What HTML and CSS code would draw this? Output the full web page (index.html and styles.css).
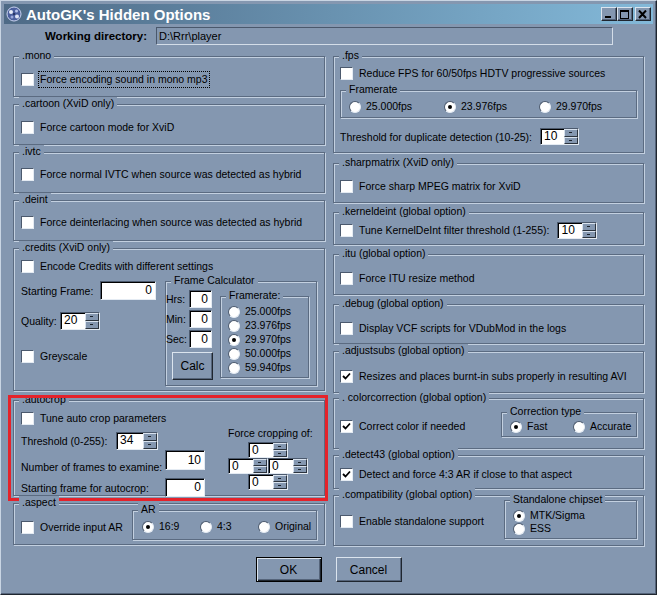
FILE: index.html
```html
<!DOCTYPE html>
<html lang="en">
  <head>
    <meta charset="UTF-8" />
    <title>AutoGK's Hidden Options</title>
    <link rel="stylesheet" href="styles.css">
  </head>
  <body>
    <div class="window">
      <div class="titlebar">
        <svg class="app-icon" viewBox="0 0 16 16">
          <circle cx="8" cy="8" r="7" fill="#4b5f9e" />
          <circle cx="8" cy="8" r="7" fill="none" stroke="#c9d3ef" stroke-width="1" />
          <circle cx="5" cy="6" r="2" fill="#e8ecf8" />
          <circle cx="10.5" cy="5" r="1.5" fill="#b6c2ea" />
          <circle cx="11" cy="10.5" r="2" fill="#dfe5f7" />
          <circle cx="6" cy="11" r="1.5" fill="#9aa8dc" />
          <circle cx="8" cy="8" r="1" fill="#1b2650" />
        </svg>
        <span class="title">AutoGK's Hidden Options</span>
        <div class="caption-btns">
          <span class="cbtn"><svg width="10" height="9"><rect x="1" y="6" width="6" height="2" fill="#000" /></svg></span>
          <span class="cbtn"><svg width="10" height="9"><rect x="0.5" y="0.5" width="8" height="8" fill="none" stroke="#000" /><rect x="0" y="0" width="9" height="2" fill="#000" /></svg></span>
          <span class="cbtn close"><svg width="10" height="9"><path d="M1 0.5 L8 8 M8 0.5 L1 8" stroke="#000" stroke-width="2" /></svg></span>
        </div>
      </div>

      <div class="workdir">
        <span class="workdir-label">Working directory:</span>
        <div class="workdir-field">D:\Rrr\player</div>
      </div>

      <div class="columns">
        <div class="col">
          <div class="group g-mono">
            <span class="cap">.mono</span>
            <div class="check"><span class="cb"></span><span class="focus">Force encoding sound in mono mp3</span></div>
          </div>
          <div class="group g-cartoon">
            <span class="cap">.cartoon (XviD only)</span>
            <div class="check"><span class="cb"></span>Force cartoon mode for XviD</div>
          </div>
          <div class="group g-ivtc">
            <span class="cap">.ivtc</span>
            <div class="check"><span class="cb"></span>Force normal IVTC when source was detected as hybrid</div>
          </div>
          <div class="group g-deint">
            <span class="cap">.deint</span>
            <div class="check"><span class="cb"></span>Force deinterlacing when source was detected as hybrid</div>
          </div>

          <div class="group g-credits">
            <span class="cap">.credits (XviD only)</span>
            <div class="check"><span class="cb"></span>Encode Credits with different settings</div>
            <div class="credits-body">
              <div class="credits-left">
                <div class="row">
                  <span class="lbl-start">Starting Frame:</span>
                  <div class="edit w-start">0</div>
                </div>
                <div class="row row-quality">
                  <span class="lbl-quality">Quality:</span>
                  <div class="spin s-quality"><span class="spin-val">20</span><span class="spin-btns"><i></i><i></i></span></div>
                </div>
                <div class="check grey"><span class="cb"></span>Greyscale</div>
              </div>
              <div class="group g-calc">
                <span class="cap">Frame Calculator</span>
                <div class="calc-left">
                  <div class="hms"><span class="lbl-hms">Hrs:</span><div class="edit w-hms">0</div></div>
                  <div class="hms"><span class="lbl-hms">Min:</span><div class="edit w-hms">0</div></div>
                  <div class="hms"><span class="lbl-hms">Sec:</span><div class="edit w-hms">0</div></div>
                  <div class="btn calc">Calc</div>
                </div>
                <div class="group g-rate">
                  <span class="cap">Framerate:</span>
                  <div class="radio"><span class="rb"></span>25.000fps</div>
                  <div class="radio"><span class="rb"></span>23.976fps</div>
                  <div class="radio"><span class="rb on"></span>29.970fps</div>
                  <div class="radio"><span class="rb"></span>50.000fps</div>
                  <div class="radio"><span class="rb"></span>59.940fps</div>
                </div>
              </div>
            </div>
          </div>

          <div class="group g-autocrop">
            <span class="cap">.autocrop</span>
            <div class="check"><span class="cb"></span>Tune auto crop parameters</div>
            <div class="autocrop-body">
              <div class="ac-left">
                <div class="row row-thresh">
                  <span class="lbl-thresh">Threshold (0-255):</span>
                  <div class="spin s-thresh"><span class="spin-val">34</span><span class="spin-btns"><i></i><i></i></span></div>
                </div>
                <div class="row row-frames">
                  <span class="lbl-frames">Number of frames to examine:</span>
                  <div class="edit w-frames">10</div>
                </div>
                <div class="row row-startac">
                  <span class="lbl-frames">Starting frame for autocrop:</span>
                  <div class="edit w-startac">0</div>
                </div>
              </div>
              <div class="ac-right">
                <div class="force-lbl">Force cropping of:</div>
                <div class="cross">
                  <div class="spin s-crop c-top"><span class="spin-val">0</span><span class="spin-btns"><i></i><i></i></span></div>
                  <div class="spin s-crop c-left"><span class="spin-val">0</span><span class="spin-btns"><i></i><i></i></span></div>
                  <div class="spin s-crop c-right"><span class="spin-val">0</span><span class="spin-btns"><i></i><i></i></span></div>
                  <div class="spin s-crop c-bottom"><span class="spin-val">0</span><span class="spin-btns"><i></i><i></i></span></div>
                </div>
              </div>
            </div>
          </div>

          <div class="group g-aspect">
            <span class="cap">.aspect</span>
            <div class="check aspect-check"><span class="cb"></span>Override input AR</div>
            <div class="group g-ar">
              <span class="cap">AR</span>
              <div class="radio ar-item"><span class="rb on"></span>16:9</div>
              <div class="radio ar-item"><span class="rb"></span>4:3</div>
              <div class="radio"><span class="rb"></span>Original</div>
            </div>
          </div>
        </div>

        <div class="col col-right">
          <div class="group g-fps">
            <span class="cap">.fps</span>
            <div class="check"><span class="cb"></span>Reduce FPS for 60/50fps HDTV progressive sources</div>
            <div class="group g-fpsrate">
              <span class="cap">Framerate</span>
              <div class="radio fr-item"><span class="rb"></span>25.000fps</div>
              <div class="radio fr-item"><span class="rb on"></span>23.976fps</div>
              <div class="radio"><span class="rb"></span>29.970fps</div>
            </div>
            <div class="row row-dup">
              <span class="lbl-dup">Threshold for duplicate detection (10-25):</span>
              <div class="spin s-dup"><span class="spin-val">10</span><span class="spin-btns"><i></i><i></i></span></div>
            </div>
          </div>
          <div class="group g-sharp">
            <span class="cap">.sharpmatrix (XviD only)</span>
            <div class="check"><span class="cb"></span>Force sharp MPEG matrix for XviD</div>
          </div>
          <div class="group g-kernel">
            <span class="cap">.kerneldeint (global option)</span>
            <div class="row">
              <div class="check"><span class="cb"></span>Tune KernelDeInt filter threshold (1-255):</div>
              <div class="spin s-kernel"><span class="spin-val">10</span><span class="spin-btns"><i></i><i></i></span></div>
            </div>
          </div>
          <div class="group g-itu">
            <span class="cap">.itu (global option)</span>
            <div class="check"><span class="cb"></span>Force ITU resize method</div>
          </div>
          <div class="group g-debug">
            <span class="cap">.debug (global option)</span>
            <div class="check"><span class="cb"></span>Display VCF scripts for VDubMod in the logs</div>
          </div>
          <div class="group g-subs">
            <span class="cap">.adjustsubs (global option)</span>
            <div class="check"><span class="cb on"><svg width="9" height="9"><polyline points="1,4 3.5,6.5 8,1.5" fill="none" stroke="#000" stroke-width="1.8" /></svg></span>Resizes and places burnt-in subs properly in resulting AVI</div>
          </div>
          <div class="group g-color">
            <span class="cap">. colorcorrection (global option)</span>
            <div class="check color-check"><span class="cb on"><svg width="9" height="9"><polyline points="1,4 3.5,6.5 8,1.5" fill="none" stroke="#000" stroke-width="1.8" /></svg></span>Correct color if needed</div>
            <div class="group g-ctype">
              <span class="cap">Correction type</span>
              <div class="radio ct-item"><span class="rb on"></span>Fast</div>
              <div class="radio"><span class="rb"></span>Accurate</div>
            </div>
          </div>
          <div class="group g-detect">
            <span class="cap">.detect43 (global option)</span>
            <div class="check"><span class="cb on"><svg width="9" height="9"><polyline points="1,4 3.5,6.5 8,1.5" fill="none" stroke="#000" stroke-width="1.8" /></svg></span>Detect and force 4:3 AR if close to that aspect</div>
          </div>
          <div class="group g-compat">
            <span class="cap">.compatibility (global option)</span>
            <div class="check compat-check"><span class="cb"></span>Enable standalone support</div>
            <div class="group g-chip">
              <span class="cap">Standalone chipset</span>
              <div class="radio"><span class="rb on"></span>MTK/Sigma</div>
              <div class="radio"><span class="rb"></span>ESS</div>
            </div>
          </div>
        </div>
      </div>

      <div class="buttons">
        <div class="btn default">OK</div>
        <div class="btn">Cancel</div>
      </div>
    </div>
  </body>
</html>
```

FILE: styles.css
```css
body {
  margin: 0;
  font-family: "Liberation Sans", Arial, sans-serif;
  font-size: 10.5px;
  color: #000;
}
.window {
  width: 657px;
  height: 595px;
  box-sizing: border-box;
  background: #8497b0;
  border: 1px solid;
  border-color: #c9d5e3 #1f262f #1f262f #c9d5e3;
  box-shadow: inset -1px -1px 0 #55647a;
  padding: 3px;
  white-space: nowrap;
}

/* title bar */
.titlebar {
  height: 20px;
  display: flex;
  align-items: center;
  background: linear-gradient(90deg, #4e6a86, #83b9d9);
  color: #fff;
}
.app-icon {
  width: 16px;
  height: 16px;
  margin: 0 4px 0 2px;
}
.title {
  font-weight: bold;
  font-size: 15px;
}
.caption-btns {
  margin-left: auto;
  margin-right: 2px;
  display: flex;
}
.cbtn {
  width: 16px;
  height: 14px;
  box-sizing: border-box;
  background: #8497b0;
  border: 1px solid;
  border-color: #dbe4ee #1f262f #1f262f #dbe4ee;
  box-shadow: inset -1px -1px 0 #55647a;
  display: flex;
  align-items: center;
  justify-content: center;
}
.cbtn.close {
  margin-left: 2px;
}

/* working directory */
.workdir {
  display: flex;
  align-items: center;
  height: 18px;
  margin-top: 3px;
}
.workdir-label {
  width: 143px;
  margin-right: 9px;
  text-align: right;
  font-weight: bold;
  font-size: 11.5px;
}
.workdir-field {
  width: 457px;
  height: 18px;
  box-sizing: border-box;
  border: 1px solid;
  border-color: #4a586c #d4dde8 #d4dde8 #4a586c;
  padding: 2px 0 0 2px;
  line-height: 13px;
  font-size: 11px;
}

/* columns and group boxes */
.columns {
  display: grid;
  grid-template-columns: 312px 311px;
  column-gap: 8px;
  margin-top: 11px;
  padding-left: 9px;
}
.col {
  display: flex;
  flex-direction: column;
}
.group {
  position: relative;
  box-sizing: border-box;
  border: 1px solid #5b6b81;
  box-shadow: inset 1px 1px 0 #c3d0e0, 1px 1px 0 #c3d0e0;
  padding: 0 7px;
}
.col-right > .group {
  padding: 0 6px;
}
.cap {
  position: absolute;
  top: -8px;
  left: 5px;
  padding: 0 3px;
  background: #8497b0;
  line-height: 13px;
}

.g-mono { height: 41px; padding-top: 16px; }
.g-cartoon { height: 41px; margin-top: 7px; padding-top: 16px; }
.g-ivtc { height: 41px; margin-top: 7px; padding-top: 15px; }
.g-deint { height: 41px; margin-top: 7px; padding-top: 15px; }
.g-credits { height: 143px; margin-top: 7px; padding-top: 11px; }
.g-autocrop { height: 96px; margin-top: 9px; padding-top: 11px; }
.g-aspect { height: 42px; margin-top: 7px; padding-top: 6px; display: flex; align-items: flex-start; }

.col-right .g-fps { height: 97px; padding-top: 10px; }
.col-right .g-sharp { height: 40px; margin-top: 10px; padding-top: 16px; }
.col-right .g-kernel { height: 33px; margin-top: 9px; padding-top: 9px; }
.col-right .g-itu { height: 41px; margin-top: 9px; padding-top: 17px; }
.col-right .g-debug { height: 40px; margin-top: 9px; padding-top: 17px; }
.col-right .g-subs { height: 42px; margin-top: 7px; padding-top: 18px; }
.col-right .g-color { height: 51px; margin-top: 5px; padding-top: 13px; display: flex; align-items: flex-start; }
.col-right .g-detect { height: 34px; margin-top: 6px; padding-top: 12px; }
.col-right .g-compat { height: 51px; margin-top: 6px; padding-top: 4px; display: flex; align-items: flex-start; }

/* the red marker round .autocrop */
.g-autocrop::after {
  content: "";
  position: absolute;
  left: -6px;
  top: -6px;
  right: -4px;
  bottom: -6px;
  border: 3px solid #e5222a;
}

/* controls */
.check,
.radio {
  display: flex;
  align-items: center;
  height: 13px;
  line-height: 13px;
}
.cb {
  flex: none;
  width: 13px;
  height: 13px;
  box-sizing: border-box;
  margin-right: 6px;
  background: #fff;
  border: 1px solid;
  border-color: #4b596d #e4ebf3 #e4ebf3 #4b596d;
  display: flex;
  align-items: center;
  justify-content: center;
}
.focus {
  outline: 1px dotted #000;
  outline-offset: 1px;
}
.rb {
  flex: none;
  position: relative;
  width: 12px;
  height: 12px;
  box-sizing: border-box;
  margin-right: 5px;
  border-radius: 50%;
  background: #fff;
  border: 1px solid;
  border-color: #4b596d #e4ebf3 #e4ebf3 #4b596d;
}
.rb.on::after {
  content: "";
  position: absolute;
  left: 3px;
  top: 3px;
  width: 4px;
  height: 4px;
  border-radius: 50%;
  background: #000;
}
.row {
  display: flex;
  align-items: center;
}
.edit {
  flex: none;
  box-sizing: border-box;
  height: 19px;
  background: #fff;
  border: 1px solid;
  border-color: #4b596d #e4ebf3 #e4ebf3 #4b596d;
  box-shadow: inset 1px 1px 0 #000;
  text-align: right;
  padding: 0 3px;
  line-height: 17px;
  font-size: 12px;
}
.spin {
  flex: none;
  display: flex;
  box-sizing: border-box;
  width: 40px;
  height: 17px;
  background: #fff;
  border: 1px solid;
  border-color: #4b596d #e4ebf3 #e4ebf3 #4b596d;
  box-shadow: inset 1px 1px 0 #000;
  font-size: 12px;
}
.spin-val {
  flex: 1;
  padding-left: 3px;
  line-height: 15px;
}
.spin-btns {
  width: 14px;
  display: flex;
  flex-direction: column;
}
.spin-btns i {
  flex: 1;
  position: relative;
  box-sizing: border-box;
  background: #8497b0;
  border: 1px solid;
  border-color: #d8e2ee #2b333d #2b333d #d8e2ee;
}
.spin-btns i::after {
  content: "";
  position: absolute;
  left: 4px;
  top: 2px;
  width: 3px;
  height: 1px;
  background: #1b222b;
}
.btn {
  width: 66px;
  height: 25px;
  box-sizing: border-box;
  background: #8497b0;
  border: 1px solid;
  border-color: #dbe4ee #1f262f #1f262f #dbe4ee;
  box-shadow: inset -1px -1px 0 #55647a;
  display: flex;
  align-items: center;
  justify-content: center;
  font-size: 12px;
}
.btn.default {
  border: 1px solid #000;
  box-shadow: inset 1px 1px 0 #dbe4ee, inset -1px -1px 0 #1f262f, inset -2px -2px 0 #55647a;
}

/* .credits */
.credits-body {
  display: flex;
  margin-top: 8px;
}
.credits-left {
  width: 144px;
}
.lbl-start { width: 79px; }
.w-start { width: 56px; }
.row-quality { margin-top: 12px; }
.lbl-quality { width: 39px; }
.s-quality { height: 18px; }
.grey { margin-top: 20px; }
.g-calc {
  width: 152px;
  height: 105px;
  padding: 8px 0 0 0;
  display: flex;
  align-items: flex-start;
}
.calc-left {
  width: 46px;
}
.hms {
  display: flex;
  align-items: center;
  margin-bottom: 2px;
}
.lbl-hms { width: 23px; }
.w-hms { width: 23px; height: 18px; line-height: 16px; }
.btn.calc {
  width: 41px;
  height: 28px;
  margin: 4px 0 0 6px;
}
.g-rate {
  width: 89px;
  height: 82px;
  margin: 6px 0 0 8px;
  padding: 8px 0 0 7px;
  display: flex;
  flex-direction: column;
  gap: 1px;
}

/* .autocrop */
.autocrop-body {
  display: flex;
  margin-top: 2px;
}
.ac-left {
  width: 207px;
}
.row-thresh { margin-top: 5px; }
.lbl-thresh { width: 95px; }
.s-thresh { width: 42px; height: 18px; }
.row-frames { align-items: flex-start; }
.row-frames .lbl-frames { padding-top: 11px; }
.lbl-frames { width: 144px; }
.w-frames { width: 40px; height: 20px; line-height: 18px; }
.row-startac { margin-top: 5px; }
.w-startac { width: 40px; }
.force-lbl {
  line-height: 13px;
}
.cross {
  display: grid;
  grid-template-columns: repeat(4, 20px);
  grid-template-rows: repeat(3, 16px);
  margin-top: 2px;
}
.s-crop { height: 16px; }
.s-crop .spin-val { line-height: 14px; }
.c-top { grid-column: 2 / 4; grid-row: 1; }
.c-left { grid-column: 1 / 3; grid-row: 2; }
.c-right { grid-column: 3 / 5; grid-row: 2; }
.c-bottom { grid-column: 2 / 4; grid-row: 3; }

/* .aspect */
.aspect-check { margin-top: 11px; }
.g-ar {
  width: 185px;
  height: 30px;
  margin-left: auto;
  padding: 9px 0 0 9px;
  display: flex;
  align-items: flex-start;
}
.ar-item { width: 58px; }

/* right column */
.g-fpsrate {
  height: 28px;
  margin-top: 10px;
  padding: 9px 0 0 8px;
  display: flex;
  align-items: flex-start;
}
.fr-item { width: 95px; }
.row-dup { margin-top: 10px; }
.lbl-dup { width: 200px; }
.s-dup { width: 39px; }
.s-kernel { margin-left: 8px; }
.color-check { margin-top: 8px; }
.g-ctype {
  width: 136px;
  height: 25px;
  margin-left: auto;
  padding: 7px 0 0 8px;
  display: flex;
  align-items: flex-start;
}
.ct-item { width: 63px; }
.compat-check { margin-top: 15px; }
.g-chip {
  width: 133px;
  height: 39px;
  margin-left: auto;
  padding: 8px 0 0 8px;
}

/* bottom buttons */
.buttons {
  display: flex;
  justify-content: center;
  gap: 14px;
  margin-top: 11px;
}
```
